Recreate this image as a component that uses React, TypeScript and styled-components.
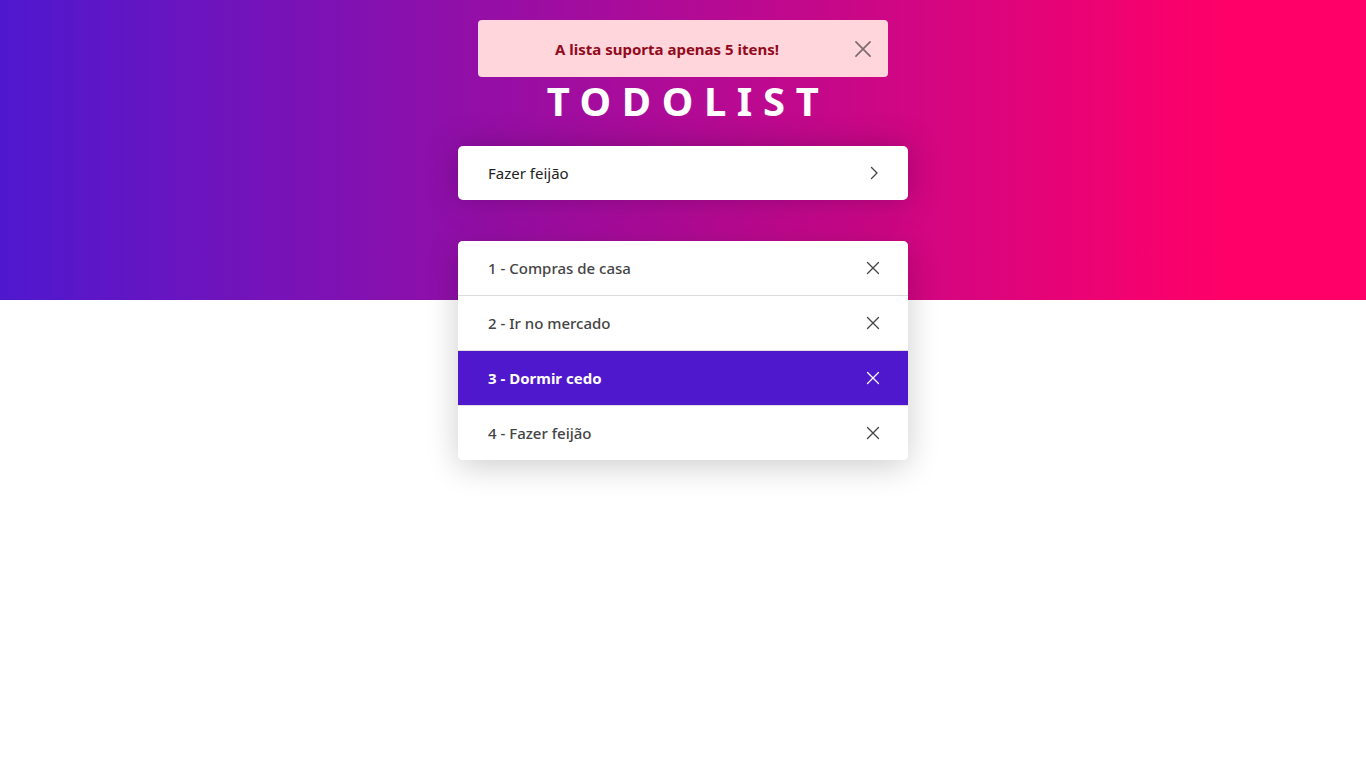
import React from 'react';
import styled, { createGlobalStyle } from 'styled-components';

const GlobalStyle = createGlobalStyle`
  * {
    box-sizing: border-box;
  }

  body {
    margin: 0;
    font-family: "Noto Sans", "Open Sans", sans-serif;
    background: #fff;
  }
`;

const Page = styled.div`
  min-height: 768px;
  position: relative;
`;

const Banner = styled.div`
  height: 300px;
  background: linear-gradient(to right, #4f18cf 0%, #ff0068 90%);
`;

const Content = styled.main`
  position: absolute;
  top: 0;
  left: 0;
  right: 0;
  display: flex;
  flex-direction: column;
  align-items: center;
`;

const Toast = styled.div`
  position: absolute;
  top: 20px;
  left: 50%;
  transform: translateX(-50%);
  width: 410px;
  height: 57px;
  background: #fed6dc;
  border-radius: 4px;
  display: flex;
  align-items: center;
  gap: 14px;
  padding: 0 16px;
  color: #920a1c;
  font-size: 15px;
  font-weight: 700;
`;

const ToastMessage = styled.span`
  flex: 1;
  text-align: center;
`;

const ToastClose = styled.button`
  border: none;
  background: none;
  padding: 0;
  display: flex;
  color: #7a6c6f;
  cursor: pointer;
`;

const Title = styled.h1`
  margin: 78px 0 0;
  color: #fff;
  font-size: 40px;
  font-weight: 700;
  letter-spacing: 10.6px;
  line-height: 46px;
  padding-left: 10px;
`;

const InputBox = styled.form`
  margin-top: 22px;
  width: 450px;
  height: 54px;
  background: #fff;
  border-radius: 5px;
  box-shadow: 0 0 30px rgba(60, 0, 70, 0.35);
  display: flex;
  align-items: center;
  padding: 0 29px 0 30px;
`;

const Input = styled.input`
  flex: 1;
  border: none;
  outline: none;
  font-family: inherit;
  font-size: 15px;
  color: #222;
  background: transparent;
  padding: 0;
`;

const SubmitButton = styled.button`
  border: none;
  background: none;
  padding: 0;
  display: flex;
  color: #444;
  cursor: pointer;
`;

const List = styled.ul`
  margin: 41px 0 0;
  padding: 0;
  list-style: none;
  width: 450px;
  background: #fff;
  border-radius: 5px;
  overflow: hidden;
  box-shadow: 0 6px 32px rgba(0, 0, 0, 0.2);
`;

const Item = styled.li<{ $active?: boolean }>`
  height: 55px;
  display: flex;
  align-items: center;
  justify-content: space-between;
  padding: 0 28px 0 30px;
  font-size: 15px;
  font-weight: ${(p) => (p.$active ? 700 : 500)};
  color: ${(p) => (p.$active ? '#fff' : '#444')};
  background: ${(p) => (p.$active ? '#5018cc' : '#fff')};
  border-top: 1px solid #ddd;

  &:first-child {
    border-top: none;
    height: 54px;
  }
`;

const RemoveButton = styled.button<{ $active?: boolean }>`
  border: none;
  background: none;
  padding: 0;
  display: flex;
  color: ${(p) => (p.$active ? '#fff' : '#444')};
  cursor: pointer;
`;

const XIcon = ({ size = 14 }: { size?: number }) => (
  <svg width={size} height={size} viewBox="0 0 14 14" fill="none" stroke="currentColor" strokeWidth="1.3" strokeLinecap="round">
    <path d="M1.5 1.5 L12.5 12.5 M12.5 1.5 L1.5 12.5" />
  </svg>
);

const Chevron = () => (
  <svg width="10" height="14" viewBox="0 0 10 14" fill="none" stroke="currentColor" strokeWidth="1.3" strokeLinecap="round" strokeLinejoin="round">
    <path d="M2.5 1.5 L8 7 L2.5 12.5" />
  </svg>
);

const todos = ['Compras de casa', 'Ir no mercado', 'Dormir cedo', 'Fazer feijão'];

export default function App() {
  return (
    <Page>
      <GlobalStyle />
      <Banner />
      <Content>
        <Toast>
          <ToastMessage>A lista suporta apenas 5 itens!</ToastMessage>
          <ToastClose aria-label="Fechar">
            <XIcon size={18} />
          </ToastClose>
        </Toast>
        <Title>TODOLIST</Title>
        <InputBox onSubmit={(e) => e.preventDefault()}>
          <Input defaultValue="Fazer feijão" />
          <SubmitButton type="submit" aria-label="Adicionar">
            <Chevron />
          </SubmitButton>
        </InputBox>
        <List>
          {todos.map((t, i) => (
            <Item key={t} $active={i === 2}>
              {i + 1} - {t}
              <RemoveButton $active={i === 2} aria-label="Remover">
                <XIcon />
              </RemoveButton>
            </Item>
          ))}
        </List>
      </Content>
    </Page>
  );
}
